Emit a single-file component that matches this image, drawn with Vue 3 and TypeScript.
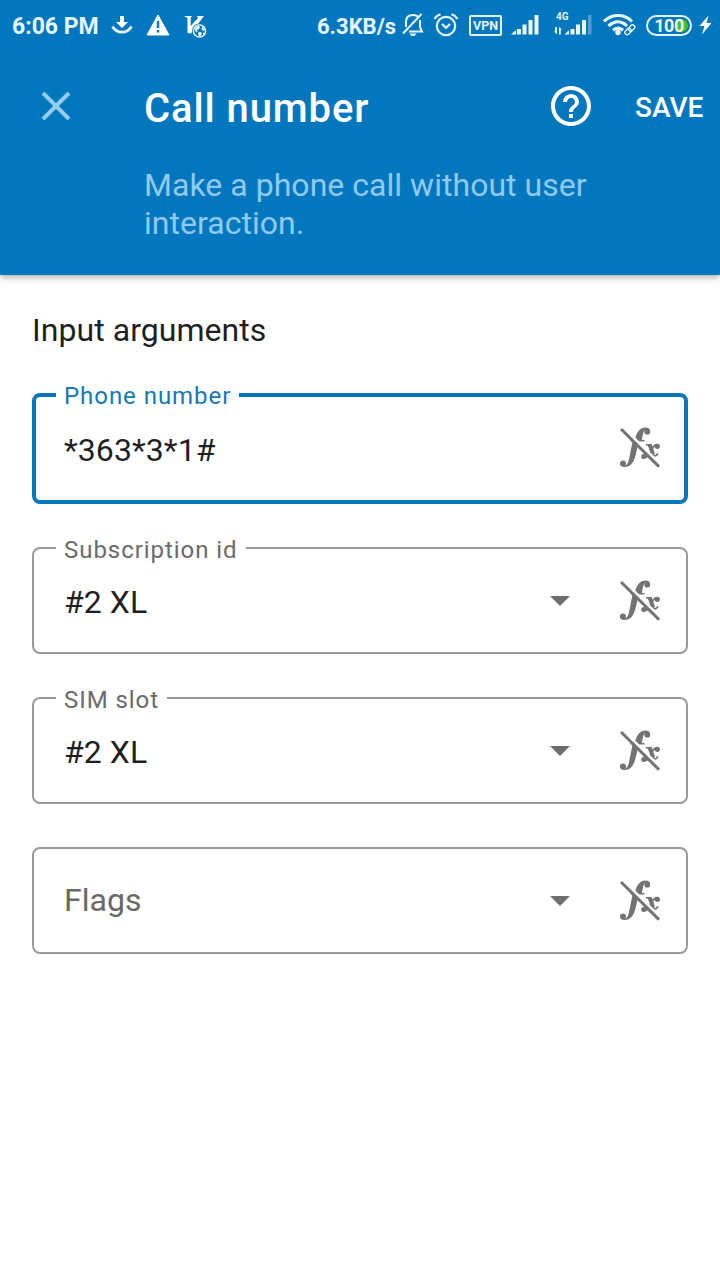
<script setup lang="ts">
interface Field {
  id: string
  label: string
  value: string
  dropdown: boolean
  focused: boolean
}

const fields: Field[] = [
  { id: 'phone', label: 'Phone number', value: '*363*3*1#', dropdown: false, focused: true },
  { id: 'subscription', label: 'Subscription id', value: '#2 XL', dropdown: true, focused: false },
  { id: 'sim', label: 'SIM slot', value: '#2 XL', dropdown: true, focused: false },
  { id: 'flags', label: 'Flags', value: '', dropdown: true, focused: false },
]
</script>

<template>
  <div class="screen">
    <header class="header">
      <div class="status">
        <span class="clock">6:06 PM</span>
        <svg class="i-download" width="22" height="20" viewBox="0 0 22 20">
          <path d="M9 1h4v6h4l-6 6-6-6h4z" fill="#fff" />
          <path d="M1.500 11.500c4.500 7.500 14.500 7.500 19 0" fill="none" stroke="#eaf6ff" stroke-width="2.800" />
        </svg>
        <svg class="i-warning" width="24" height="22" viewBox="0 0 24 22">
          <path d="M12 1 23 21H1z" fill="#fff" stroke="#fff" stroke-linejoin="round" />
          <path d="M12 7v7M12 16v2.500" stroke="#0277bd" stroke-width="2.400" />
        </svg>
        <svg class="i-globe" width="24" height="24" viewBox="0 0 24 24">
          <path d="M0 1h8l-1.300 1.500V11L14 3l-1-2h7L7 18.500 3.500 18V3z" fill="#fff" />
          <circle cx="15.500" cy="16" r="7.600" fill="#0277bd" />
          <circle cx="15.500" cy="16" r="6.100" fill="none" stroke="#fff" stroke-width="1.400" />
          <path d="m11 13.500 3.500-3 1.500 1.500-1 2-2 .8.500 1.700-1.500 1zM18 11.500l3 3-1.500 1.500-2-1.500zM14 17.500l3-.5 1 2-2 2.500-1.500-1zM19 17.500l1.500.5-1.500 2z" fill="#fff" />
        </svg>
        <span class="speed">6.3KB/s</span>
        <svg class="i-bell" width="24" height="26" viewBox="0 0 24 26" fill="none" stroke="#e6f5ff" stroke-width="2">
          <path d="M5 15V10c0-7 5-7 7-7 3 0 4.500 1 5.500 2.500M19 8v7l2 4.500H8M2 21.500 20.500 2" />
          <path d="M8.500 21.500h7l-2 2.500h-3z" fill="#e6f5ff" stroke="none" />
        </svg>
        <svg class="i-alarm" width="26" height="26" viewBox="0 0 26 26" fill="none" stroke="#e6f5ff" stroke-width="2.200">
          <circle cx="13" cy="14" r="9.200" />
          <path d="m9 12 4 3.800 4-3.800M1.500 7Q3 4 7.500 2.300M18.500 2.300Q23 4 24.500 7" />
        </svg>
        <span class="vpn">VPN</span>
        <svg class="i-signal" width="28" height="21" viewBox="0 0 28 21" fill="#e9f7ff">
          <path d="M0 20.500 5 16v4.500zM6 15h4v5.500H6zM11.500 10.500h4v10h-4zM17.500 6h4v14.500h-4zM23.500 1h4v19.500h-4z" />
        </svg>
        <span class="mobile">
          <span class="net">4G</span>
          <svg width="38" height="21" viewBox="0 0 38 21" fill="#e9f7ff">
            <path d="M0 17.500h1.200V13H3v7.500zM8 15.500H6.800V20.500H5V13z" />
            <path d="M10.500 20.500 15 16v4.500zM16.500 15h4v5.500h-4zM22 10.500h4v10h-4zM28 6h4v14.500h-4z" />
            <path d="M34 1h3.500v19.500H34z" fill="#4ea0d1" />
          </svg>
        </span>
        <svg class="i-wifi" width="33" height="22" viewBox="0 0 33 22" fill="none" stroke="#e9f7ff">
          <path d="M1 7.500C9-.5 21-.5 29 7.500M5.500 12c6-5.500 13-5.500 18.500 0M10 16.200c3.500-3 6.500-3 10 0" stroke-width="3.100" />
          <circle cx="15" cy="18.500" r="2.700" fill="#e9f7ff" stroke="none" />
          <g stroke="#0277bd" stroke-width="5"><path d="m24 20 6-6" /></g>
          <g stroke-width="1.400" transform="rotate(-45 27 16)">
            <rect x="21" y="13.500" width="7" height="4.500" rx="2.200" />
            <rect x="26" y="13.500" width="7" height="4.500" rx="2.200" />
          </g>
        </svg>
        <span class="battery"><span class="level">100</span></span>
        <svg class="i-bolt" width="13" height="20" viewBox="0 0 13 20">
          <path d="M9.500.5.5 11h5L3 19.500 12.500 8h-5z" fill="#fff" />
        </svg>
      </div>

      <div class="toolbar">
        <svg class="close" width="30" height="30" viewBox="0 0 30 30">
          <path d="m2 2 26 26M28 2 2 28" stroke="#94cdf1" stroke-width="3.900" />
        </svg>
        <h1 class="title">Call number</h1>
        <svg class="help" width="48" height="48" viewBox="0 0 24 24" fill="#fff">
          <path d="M11 18h2v-2h-2v2zm1-16C6.480 2 2 6.480 2 12s4.480 10 10 10 10-4.480 10-10S17.520 2 12 2zm0 18c-4.410 0-8-3.590-8-8s3.590-8 8-8 8 3.590 8 8-3.590 8-8 8zm0-14c-2.210 0-4 1.790-4 4h2c0-1.100.9-2 2-2s2 .9 2 2c0 2-3 1.750-3 5h2c0-2.250 3-2.500 3-5 0-2.210-1.790-4-4-4z" />
        </svg>
        <span class="save">SAVE</span>
      </div>
      <p class="desc">Make a phone call without user<br />interaction.</p>
    </header>

    <main class="content">
      <h2 class="section">Input arguments</h2>
      <div v-for="f in fields" :key="f.id" class="field" :class="{ focused: f.focused }">
        <span v-if="f.value" class="label">{{ f.label }}</span>
        <span v-if="f.value" class="value">{{ f.value }}</span>
        <span v-else class="value hint">{{ f.label }}</span>
        <svg v-if="f.dropdown" class="arrow" width="20" height="10" viewBox="0 0 20 10">
          <path d="M0 0h20L10 10z" fill="#6e6e6e" />
        </svg>
        <svg class="fx" width="40" height="42" viewBox="0 0 40 42">
          <g fill="#737373">
            <path d="M15 12C16.500 5 20.500.6 25.500.6c3 0 4.700 1.500 4.500 3.600l-2-1.200c-2.500-1.500-4.300 1-5 4L21.500 14h-6z" />
            <circle cx="27.300" cy="4.700" r="2.900" />
            <path d="M12.700 13.500h6C17.500 20 16.500 25 15.300 29c-1.800 7-5.300 11-10.300 11-3 0-5-1.500-5-3.500l3 1.800c3 1.500 5-1.500 6-6z" />
            <circle cx="3" cy="36.600" r="3" />
            <circle cx="37.300" cy="19.300" r="2.600" />
            <circle cx="23.700" cy="29.500" r="2.500" />
          </g>
          <g fill="none" stroke="#737373">
            <path d="M10.500 13.700h14" stroke-width="1.600" />
            <path d="M26 17.800h4.500" stroke-width="1.600" />
            <path d="M29.500 17.500c1.500 3 2.500 6.500 3.500 10" stroke-width="4" />
            <path d="M33 27c1 2.500 3 2.500 5-.5" stroke-width="1.800" />
            <path d="M37.500 17.800c-3.500-.5-5 3-6.500 6-1.500 3.500-3.500 6.700-6.500 6.700" stroke-width="1.800" />
          </g>
          <path d="m3.300.7 37 37" stroke="#fff" stroke-width="3" />
          <path d="m1 2 38 37.700" stroke="#737373" stroke-width="3" />
        </svg>
      </div>
    </main>
  </div>
</template>

<style>
body {
  margin: 0;
  background: #fff;
}
</style>

<style scoped>
.screen {
  width: 720px;
  height: 1280px;
  overflow: hidden;
  background: #fff;
  color: #1f1f1f;
  font-family: Roboto, 'Liberation Sans', sans-serif;
}
.header {
  box-sizing: border-box;
  height: 275px;
  background: #0277bd;
  box-shadow: 0 2px 7px rgba(0, 0, 0, 0.34);
}
.status {
  display: flex;
  align-items: flex-start;
  height: 50px;
  color: #e6f6ff;
}
.status svg {
  flex: none;
  display: block;
}
.clock,
.speed {
  flex: none;
  margin-top: 13px;
  font-size: 23px;
  font-weight: 700;
  line-height: 28px;
  white-space: nowrap;
}
.clock { width: 99px; margin-left: 12px; }
.speed { width: 83px; margin-left: 109px; font-size: 22px; }
.status .i-download { margin: 15px 0 0; }
.status .i-warning { margin: 14px 0 0 13px; }
.status .i-globe { margin: 15px 0 0 14px; }
.status .i-bell { margin: 12px 0 0 1px; }
.status .i-alarm { margin: 12px 0 0 8px; }
.vpn {
  flex: none;
  box-sizing: border-box;
  width: 33px;
  height: 21px;
  margin: 15px 0 0 10px;
  border: 2px solid #e1f3ff;
  border-radius: 2px;
  font-size: 12.500px;
  font-weight: 700;
  line-height: 17px;
  text-align: center;
}
.status .i-signal { margin: 14px 0 0 9px; }
.mobile {
  position: relative;
  flex: none;
  margin: 14px 0 0 15px;
}
.net {
  position: absolute;
  top: -3px;
  left: 2px;
  font-size: 10px;
  font-weight: 700;
  line-height: 12px;
}
.status .i-wifi { margin: 14px 0 0 11px; }
.battery {
  flex: none;
  box-sizing: border-box;
  width: 46px;
  height: 21px;
  margin: 15px 0 0 10px;
  padding: 2px;
  border: 2px solid #e6f6ff;
  border-radius: 11px;
}
.level {
  display: block;
  height: 13px;
  border-radius: 7px;
  background: linear-gradient(90deg, transparent 68%, #3fc51b 68%);
  font-size: 18px;
  font-weight: 700;
  line-height: 14px;
  letter-spacing: -0.500px;
  text-align: center;
}
.status .i-bolt { margin: 15px 0 0 7px; }
.toolbar {
  display: flex;
  align-items: center;
  height: 112px;
  color: #fff;
}
.close { flex: none; margin-left: 41px; }
.title {
  flex: 1;
  margin: 6px 0 0 73px;
  font-size: 40px;
  font-weight: 500;
  line-height: 48px;
  letter-spacing: 0.900px;
  white-space: nowrap;
}
.help { flex: none; margin-right: 40px; }
.save {
  width: 85px;
  margin-top: 3px;
  font-size: 28px;
  font-weight: 500;
  line-height: 32px;
}
.desc {
  margin: 4px 0 0 144px;
  color: #90caf1;
  font-size: 32px;
  line-height: 38px;
  letter-spacing: 0.030px;
}
.content { padding: 36px 32px 0; }
.section {
  margin: 0 0 44px;
  font-size: 32px;
  font-weight: 400;
  line-height: 38px;
  letter-spacing: 0.050px;
}
.field {
  position: relative;
  box-sizing: border-box;
  display: flex;
  align-items: center;
  height: 107px;
  margin-bottom: 43px;
  padding: 0 26px 0 30px;
  border: 2px solid #9a9a9a;
  border-radius: 8px;
}
.focused {
  height: 111px;
  padding: 0 24px 0 28px;
  border: 4px solid #0277bd;
}
.label {
  position: absolute;
  top: -13px;
  left: 22px;
  padding: 0 8px;
  background: #fff;
  color: #6a6a6a;
  font-size: 24px;
  line-height: 28px;
  letter-spacing: 0.950px;
}
.focused .label { top: -15px; left: 20px; color: #1578b4; }
.value {
  flex: 1;
  margin-top: 2px;
  font-size: 32px;
  line-height: 38px;
  letter-spacing: 0.050px;
}
.hint { color: #696969; margin-top: -1px; }
.arrow { flex: none; margin-right: 50px; }
.fx { flex: none; }
.focused .fx { margin-top: -2px; }
</style>
